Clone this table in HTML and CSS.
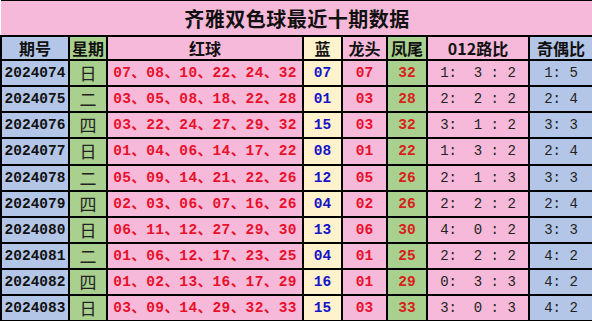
FILE: index.html
```html
<!DOCTYPE html>
<html lang="zh">
<head>
<meta charset="utf-8">
<title>齐雅双色球最近十期数据</title>
<link rel="stylesheet" href="styles.css">
</head>
<body>
<table class="sheet">
  <colgroup>
    <col class="c-issue"><col class="c-day"><col class="c-red"><col class="c-blue">
    <col class="c-head"><col class="c-tail"><col class="c-road"><col class="c-odd">
  </colgroup>
  <thead>
    <tr class="title-row"><th colspan="8" class="title">齐雅双色球最近十期数据</th></tr>
    <tr class="head-row">
      <th class="bg-blue">期号</th>
      <th class="bg-green">星期</th>
      <th class="bg-pink">红球</th>
      <th class="bg-cream">蓝</th>
      <th class="bg-pink">龙头</th>
      <th class="bg-green">凤尾</th>
      <th class="bg-pink">012路比</th>
      <th class="bg-blue">奇偶比</th>
    </tr>
  </thead>
  <tbody>
    <tr><td class="bg-blue issue">2024074</td><td class="bg-green day">日</td><td class="bg-pink reds">07、08、10、22、24、32</td><td class="bg-cream blue">07</td><td class="bg-pink redn">07</td><td class="bg-green tailn">32</td><td class="bg-pink ratio">1:  3 : 2</td><td class="bg-blue ratio2">1: 5</td></tr>
    <tr><td class="bg-blue issue">2024075</td><td class="bg-green day">二</td><td class="bg-pink reds">03、05、08、18、22、28</td><td class="bg-cream blue">01</td><td class="bg-pink redn">03</td><td class="bg-green tailn">28</td><td class="bg-pink ratio">2:  2 : 2</td><td class="bg-blue ratio2">2: 4</td></tr>
    <tr><td class="bg-blue issue">2024076</td><td class="bg-green day">四</td><td class="bg-pink reds">03、22、24、27、29、32</td><td class="bg-cream blue">15</td><td class="bg-pink redn">03</td><td class="bg-green tailn">32</td><td class="bg-pink ratio">3:  1 : 2</td><td class="bg-blue ratio2">3: 3</td></tr>
    <tr><td class="bg-blue issue">2024077</td><td class="bg-green day">日</td><td class="bg-pink reds">01、04、06、14、17、22</td><td class="bg-cream blue">08</td><td class="bg-pink redn">01</td><td class="bg-green tailn">22</td><td class="bg-pink ratio">1:  3 : 2</td><td class="bg-blue ratio2">2: 4</td></tr>
    <tr><td class="bg-blue issue">2024078</td><td class="bg-green day">二</td><td class="bg-pink reds">05、09、14、21、22、26</td><td class="bg-cream blue">12</td><td class="bg-pink redn">05</td><td class="bg-green tailn">26</td><td class="bg-pink ratio">2:  1 : 3</td><td class="bg-blue ratio2">3: 3</td></tr>
    <tr><td class="bg-blue issue">2024079</td><td class="bg-green day">四</td><td class="bg-pink reds">02、03、06、07、16、26</td><td class="bg-cream blue">04</td><td class="bg-pink redn">02</td><td class="bg-green tailn">26</td><td class="bg-pink ratio">2:  2 : 2</td><td class="bg-blue ratio2">2: 4</td></tr>
    <tr><td class="bg-blue issue">2024080</td><td class="bg-green day">日</td><td class="bg-pink reds">06、11、12、27、29、30</td><td class="bg-cream blue">13</td><td class="bg-pink redn">06</td><td class="bg-green tailn">30</td><td class="bg-pink ratio">4:  0 : 2</td><td class="bg-blue ratio2">3: 3</td></tr>
    <tr><td class="bg-blue issue">2024081</td><td class="bg-green day">二</td><td class="bg-pink reds">01、06、12、17、23、25</td><td class="bg-cream blue">04</td><td class="bg-pink redn">01</td><td class="bg-green tailn">25</td><td class="bg-pink ratio">2:  2 : 2</td><td class="bg-blue ratio2">4: 2</td></tr>
    <tr><td class="bg-blue issue">2024082</td><td class="bg-green day">四</td><td class="bg-pink reds">01、02、13、16、17、29</td><td class="bg-cream blue">16</td><td class="bg-pink redn">01</td><td class="bg-green tailn">29</td><td class="bg-pink ratio">0:  3 : 3</td><td class="bg-blue ratio2">4: 2</td></tr>
    <tr><td class="bg-blue issue">2024083</td><td class="bg-green day">日</td><td class="bg-pink reds">03、09、14、29、32、33</td><td class="bg-cream blue">15</td><td class="bg-pink redn">03</td><td class="bg-green tailn">33</td><td class="bg-pink ratio">3:  0 : 3</td><td class="bg-blue ratio2">4: 2</td></tr>
  </tbody>
</table>
</body>
</html>
```

FILE: styles.css
```css
html, body {
  margin: 0;
  padding: 0;
  background: #ffffff;
}

.sheet {
  border-collapse: collapse;
  table-layout: fixed;
  width: 592px;
  font-family: "Liberation Mono", "Noto Sans CJK SC", monospace;
}

.c-issue { width: 68px; }
.c-day { width: 38px; }
.c-red { width: 196px; }
.c-blue { width: 39px; }
.c-head { width: 45px; }
.c-tail { width: 40px; }
.c-road { width: 102px; }
.c-odd { width: 64px; }

.sheet th,
.sheet td {
  border: 2px solid #000;
  padding: 0;
  text-align: center;
  white-space: pre;
  overflow: hidden;
}

.title-row th {
  height: 34px;
  border-left: none;
  border-right: none;
  border-top: 1px solid #000;
  background: #f6b9d9;
  font-family: "Noto Sans CJK SC", sans-serif;
  font-weight: 700;
  font-size: 20px;
  color: #111;
  letter-spacing: 0.5px;
}

.head-row th {
  height: 22px;
  font-family: "Noto Sans CJK SC", sans-serif;
  font-weight: 700;
  font-size: 16px;
  line-height: 20px;
  color: #111;
}

tbody td {
  height: 24.15px;
  line-height: 20px;
}

.bg-blue { background: #b4c6e7; }
.bg-green { background: #a9d08e; }
.bg-pink { background: #f6b9d9; }
.bg-cream { background: #fff2cc; }

.issue {
  font-weight: 700;
  font-size: 14.5px;
  color: #111;
}

.day {
  font-family: "Noto Sans CJK SC", sans-serif;
  font-weight: 400;
  font-size: 17px;
  color: #222;
}

.reds {
  font-weight: 700;
  font-size: 14.5px;
  letter-spacing: 0.4px;
  color: #e8102a;
  text-align: center;
}

.blue {
  font-weight: 700;
  font-size: 14.5px;
  color: #1414c8;
}

.redn {
  font-weight: 700;
  font-size: 14.5px;
  color: #e8102a;
}

.tailn {
  font-weight: 700;
  font-size: 14.5px;
  color: #d8201c;
}

.ratio,
.ratio2 {
  font-weight: 400;
  font-size: 14px;
  color: #222;
}
```
